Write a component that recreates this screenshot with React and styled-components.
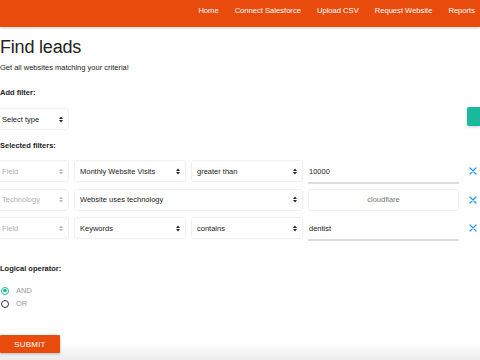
import styled, { createGlobalStyle } from "styled-components";

const GlobalStyle = createGlobalStyle`
  html, body {
    height: 100%;
  }
  body {
    margin: 0;
    font-family: "Liberation Sans", Arial, sans-serif;
    color: #222;
    background: linear-gradient(to bottom, #fff calc(100% - 18px), #ececec 100%);
    overflow: hidden;
  }
`;

const Header = styled.header`
  height: 27px;
  background: #e84b0c;
  box-shadow: 0 1px 3px rgba(0, 0, 0, 0.18);
  display: flex;
  justify-content: flex-end;
  align-items: flex-start;
  padding: 6px 5px 0 0;
  box-sizing: border-box;
  gap: 16px;
`;

const NavLink = styled.a`
  color: #fff;
  font-size: 7.6px;
  line-height: 10px;
  text-decoration: none;
`;

const Main = styled.main`
  display: flex;
  flex-direction: column;
`;

const Title = styled.h1`
  margin: 9px 0 0;
  font-size: 18px;
  line-height: 22px;
  font-weight: 400;
  letter-spacing: -0.2px;
`;

const Subtitle = styled.p`
  margin: 5px 0 0;
  font-size: 7.5px;
  line-height: 10px;
`;

const Label = styled.h3`
  margin: ${({ $top }) => $top}px 0 0;
  font-size: 7.5px;
  line-height: 10px;
  font-weight: 700;
`;

const AddRow = styled.div`
  margin-top: 9px;
  display: flex;
  justify-content: space-between;
  align-items: flex-start;
`;

const SelectBox = styled.div`
  height: 22px;
  box-sizing: border-box;
  display: flex;
  align-items: center;
  justify-content: space-between;
  padding: 0 5px;
  border: 1px solid #f0f0f0;
  border-radius: 3px;
  background: #fff;
  font-size: 7.5px;
  color: ${({ $muted }) => ($muted ? "#b0b0b0" : "#222")};
  margin-left: ${({ $edge }) => ($edge ? "-4px" : "0")};
  margin-top: ${({ $top }) => $top || 0}px;
  width: ${({ $width }) => ($width ? `${$width}px` : "auto")};
  grid-column: ${({ $span }) => ($span ? `span ${$span}` : "auto")};
`;

const AddButton = styled.button`
  width: 13px;
  height: 19px;
  border: none;
  padding: 0;
  background: #1bb99b;
  border-radius: 2px 0 0 2px;
  box-shadow: 0 1px 3px rgba(0, 0, 0, 0.2);
`;

const FilterGrid = styled.div`
  margin-top: 9px;
  display: grid;
  grid-template-columns: 69px 112px 112px 151px 1fr;
  column-gap: 5px;
  row-gap: 6.5px;
  grid-auto-rows: 22px;
  align-items: stretch;
`;

const ValueInput = styled.div`
  box-sizing: border-box;
  height: 24px;
  display: flex;
  align-items: center;
  padding-left: 1px;
  border-bottom: 2px solid #dcdcdc;
  font-size: 7.5px;
  color: #222;
`;

const ValueBox = styled.div`
  box-sizing: border-box;
  display: flex;
  align-items: center;
  justify-content: center;
  border: 1px solid #f0f0f0;
  border-radius: 3px;
  font-size: 7.5px;
  color: #777;
`;

const RemoveButton = styled.button`
  border: none;
  background: none;
  padding: 0;
  display: flex;
  align-items: center;
  justify-content: center;
  margin-left: 3px;
  width: 12px;
`;

const RadioGroup = styled.div`
  margin-top: 10px;
  display: flex;
  flex-direction: column;
`;

const RadioRow = styled.label`
  height: 13px;
  display: flex;
  align-items: center;
  gap: 7px;
  font-size: 7.5px;
  color: #9a9a9a;
`;

const RadioCircle = styled.span`
  width: 8px;
  height: 8px;
  box-sizing: border-box;
  border-radius: 50%;
  border: 1.3px solid ${({ $checked }) => ($checked ? "#1bb99b" : "#333")};
  display: flex;
  align-items: center;
  justify-content: center;
  margin-left: 1px;

  &::after {
    content: "";
    width: 3.5px;
    height: 3.5px;
    border-radius: 50%;
    background: ${({ $checked }) => ($checked ? "#1bb99b" : "transparent")};
  }
`;

const SubmitButton = styled.button`
  margin-top: 25px;
  width: 60px;
  height: 18px;
  border: none;
  background: #e84b0c;
  color: #fff;
  font-family: "Liberation Sans", Arial, sans-serif;
  font-size: 8px;
  letter-spacing: 0.2px;
  box-shadow: 0 1px 3px rgba(0, 0, 0, 0.25);
  border-radius: 1px;
  padding: 0;
`;

function Arrows({ muted }) {
  const c = muted ? "#bbb" : "#222";
  return (
    <svg width="4" height="7" viewBox="0 0 4 7">
      <path d="M0 3 L2 0.5 L4 3 Z" fill={c} />
      <path d="M0 4 L2 6.5 L4 4 Z" fill={c} />
    </svg>
  );
}

function Select({ label, muted, ...rest }) {
  return (
    <SelectBox $muted={muted} {...rest}>
      <span>{label}</span>
      <Arrows muted={muted} />
    </SelectBox>
  );
}

function CloseIcon() {
  return (
    <svg width="8" height="8" viewBox="0 0 8 8">
      <path
        d="M1 1 L7 7 M7 1 L1 7"
        stroke="#2196f3"
        strokeWidth="1.2"
        strokeLinecap="round"
      />
    </svg>
  );
}

const navItems = [
  "Home",
  "Connect Salesforce",
  "Upload CSV",
  "Request Website",
  "Reports",
];

export default function App() {
  return (
    <>
      <GlobalStyle />
      <Header>
        {navItems.map((item) => (
          <NavLink key={item}>{item}</NavLink>
        ))}
      </Header>
      <Main>
        <Title>Find leads</Title>
        <Subtitle>Get all websites matching your criteria!</Subtitle>
        <Label $top={15}>Add filter:</Label>
        <AddRow>
          <Select label="Select type" $edge $width={73} $top={1} />
          <AddButton />
        </AddRow>
        <Label $top={11}>Selected filters:</Label>
        <FilterGrid>
          <Select label="Field" muted $edge />
          <Select label="Monthly Website Visits" />
          <Select label="greater than" />
          <ValueInput>10000</ValueInput>
          <RemoveButton>
            <CloseIcon />
          </RemoveButton>

          <Select label="Technology" muted $edge />
          <Select label="Website uses technology" $span={2} />
          <ValueBox>cloudflare</ValueBox>
          <RemoveButton>
            <CloseIcon />
          </RemoveButton>

          <Select label="Field" muted $edge />
          <Select label="Keywords" />
          <Select label="contains" />
          <ValueInput>dentist</ValueInput>
          <RemoveButton>
            <CloseIcon />
          </RemoveButton>
        </FilterGrid>
        <Label $top={25}>Logical operator:</Label>
        <RadioGroup>
          <RadioRow>
            <RadioCircle $checked />
            AND
          </RadioRow>
          <RadioRow>
            <RadioCircle />
            OR
          </RadioRow>
        </RadioGroup>
        <div>
          <SubmitButton>SUBMIT</SubmitButton>
        </div>
      </Main>
    </>
  );
}
